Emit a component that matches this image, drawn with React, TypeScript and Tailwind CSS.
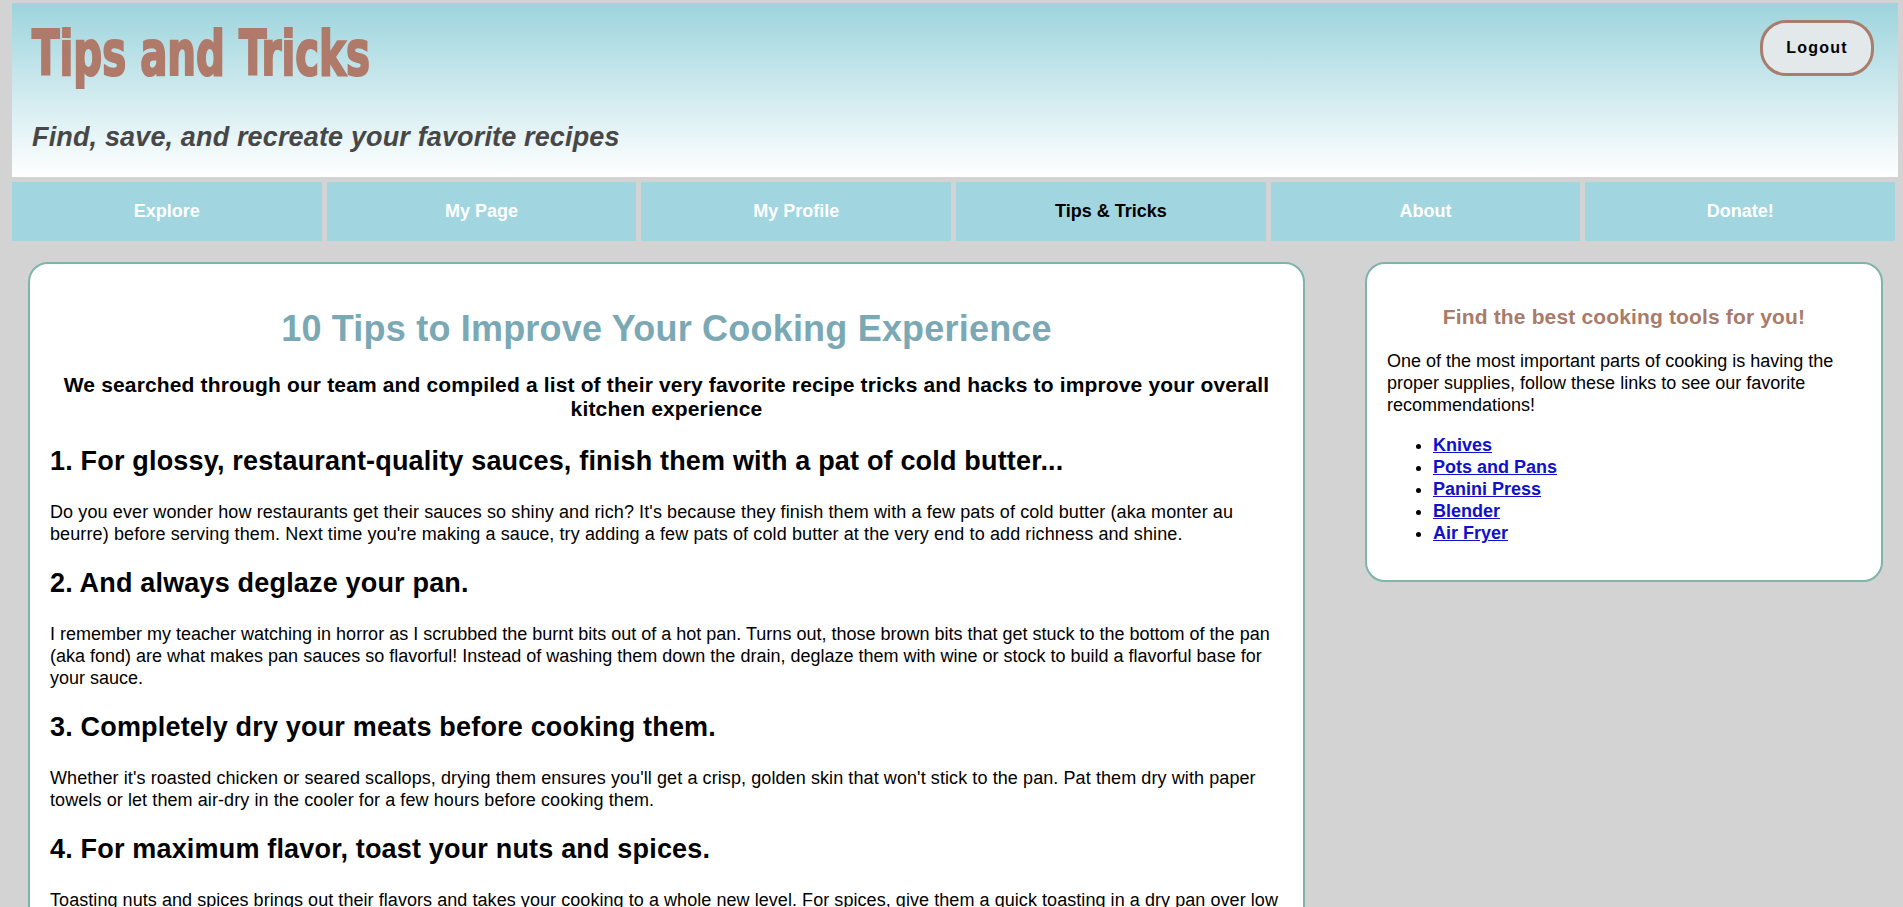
export default function App() {
  const nav = ["Explore", "My Page", "My Profile", "Tips & Tricks", "About", "Donate!"];
  const tips: { h: string; p: string; c: string }[] = [
    {
      h: "1. For glossy, restaurant-quality sauces, finish them with a pat of cold butter...",
      p: "Do you ever wonder how restaurants get their sauces so shiny and rich? It's because they finish them with a few pats of cold butter (aka monter au beurre) before serving them. Next time you're making a sauce, try adding a few pats of cold butter at the very end to add richness and shine.",
      c: "mt-[24px] text-[18px] leading-[22px] tracking-[0.11px]",
    },
    {
      h: "2. And always deglaze your pan.",
      p: "I remember my teacher watching in horror as I scrubbed the burnt bits out of a hot pan. Turns out, those brown bits that get stuck to the bottom of the pan (aka fond) are what makes pan sauces so flavorful! Instead of washing them down the drain, deglaze them with wine or stock to build a flavorful base for your sauce.",
      c: "mt-[24px] text-[18px] leading-[22px]",
    },
    {
      h: "3. Completely dry your meats before cooking them.",
      p: "Whether it's roasted chicken or seared scallops, drying them ensures you'll get a crisp, golden skin that won't stick to the pan. Pat them dry with paper towels or let them air-dry in the cooler for a few hours before cooking them.",
      c: "mt-[24px] text-[18px] leading-[22px] tracking-[0.09px]",
    },
    {
      h: "4. For maximum flavor, toast your nuts and spices.",
      p: "Toasting nuts and spices brings out their flavors and takes your cooking to a whole new level. For spices, give them a quick toasting in a dry pan over low heat until fragrant. For nuts, spread them on a baking sheet and toast them in the oven until golden brown.",
      c: "mt-[24px] text-[18px] leading-[22px] tracking-[0.06px]",
    },
    {
      h: "5. Season as you go.",
      p: "Adding salt a little at a time throughout the cooking process builds layers of flavor. Taste your food often and adjust the seasoning before serving.",
      c: "mt-[24px] text-[18px] leading-[22px]",
    },
    {
      h: "6. Let your meat rest.",
      p: "After cooking, let your meat rest for a few minutes before slicing it so the juices can redistribute and keep every bite tender and moist.",
      c: "mt-[24px] text-[18px] leading-[22px]",
    },
    {
      h: "7. Keep your knives sharp.",
      p: "A sharp knife is safer and easier to use than a dull one. Hone your knives regularly and have them sharpened a few times a year.",
      c: "mt-[24px] text-[18px] leading-[22px]",
    },
  ];
  const links = ["Knives", "Pots and Pans", "Panini Press", "Blender", "Air Fryer"];

  return (
    <div className="min-h-screen bg-[#d3d3d3] pt-[3px] font-['Liberation_Sans',Arial,sans-serif] text-[18px] text-black">
      <header className="ml-[12px] mr-[5px] flex justify-between bg-[linear-gradient(to_bottom,#9dd4dd,#ffffff)] pl-[20px] pr-[24px] pt-[23px] pb-[24px]">
        <div>
          <h1 className="origin-[left_center] scale-x-[0.8] scale-y-[1.1] whitespace-nowrap font-['DejaVu_Sans_Condensed','DejaVu_Sans',sans-serif] text-[56px] font-bold leading-[56px] text-[#b07a6a] [-webkit-text-stroke:2px_#b07a6a]">
            Tips and Tricks
          </h1>
          <p className="mt-[40px] text-[27px] font-bold italic leading-[31px] tracking-[0.15px] text-[#474747]">
            Find, save, and recreate your favorite recipes
          </p>
        </div>
        <button className="mt-[-6px] h-[56px] w-[114px] rounded-[26px] border-[3px] border-[#a97d6c] bg-[#e3e8ea] text-[16px] font-bold tracking-[1.2px] text-black">
          Logout
        </button>
      </header>

      <nav className="ml-[12px] mr-[8px] mt-[5px] flex gap-[5px]">
        {nav.map((n) => (
          <a
            key={n}
            href="#"
            className={
              n === "Tips & Tricks"
                ? "flex h-[59px] flex-1 items-center justify-center bg-[#a1d5df] text-[18px] font-bold text-black"
                : "flex h-[59px] flex-1 items-center justify-center bg-[#a1d5df] text-[18px] font-bold text-white"
            }
          >
            {n}
          </a>
        ))}
      </nav>

      <div className="mt-[21px] flex items-start gap-[60px] pl-[28px] pr-[20px] pb-[30px]">
        <main className="min-w-0 flex-1 rounded-[20px] border-2 border-[#7db5a9] bg-white px-[20px] pt-[20px] pb-[20px]">
          <h1 className="mt-[24px] text-center text-[36px] font-bold leading-[41px] tracking-[0.2px] text-[#7aa8b4]">
            10 Tips to Improve Your Cooking Experience
          </h1>
          <h3 className="mt-[24px] text-center text-[21px] font-bold leading-[24px] tracking-[0.15px]">
            We searched through our team and compiled a list of their very favorite recipe tricks and hacks to improve your overall kitchen experience
          </h3>
          {tips.map((t, i) => (
            <section key={i}>
              <h2 className={i === 0 ? "mt-[25px] text-[27px] font-bold leading-[31px] tracking-[0.18px]" : "mt-[23px] text-[27px] font-bold leading-[31px] tracking-[0.18px]"}>
                {t.h}
              </h2>
              <p className={t.c}>{t.p}</p>
            </section>
          ))}
        </main>

        <aside className="w-[518px] shrink-0 rounded-[20px] border-2 border-[#7db5a9] bg-white px-[20px] pt-[20px] pb-[18px]">
          <h3 className="mt-[21px] text-center text-[21px] font-bold leading-[24px] tracking-[0.15px] text-[#a87b6a]">
            Find the best cooking tools for you!
          </h3>
          <p className="mt-[21px] leading-[22px]">
            One of the most important parts of cooking is having the proper supplies, follow these links to see our favorite recommendations!
          </p>
          <ul className="my-[18px] list-disc pl-[46px] leading-[22px]">
            {links.map((l) => (
              <li key={l}>
                <a href="#" className="font-bold text-[#1010cc] underline">
                  {l}
                </a>
              </li>
            ))}
          </ul>
        </aside>
      </div>
    </div>
  );
}
